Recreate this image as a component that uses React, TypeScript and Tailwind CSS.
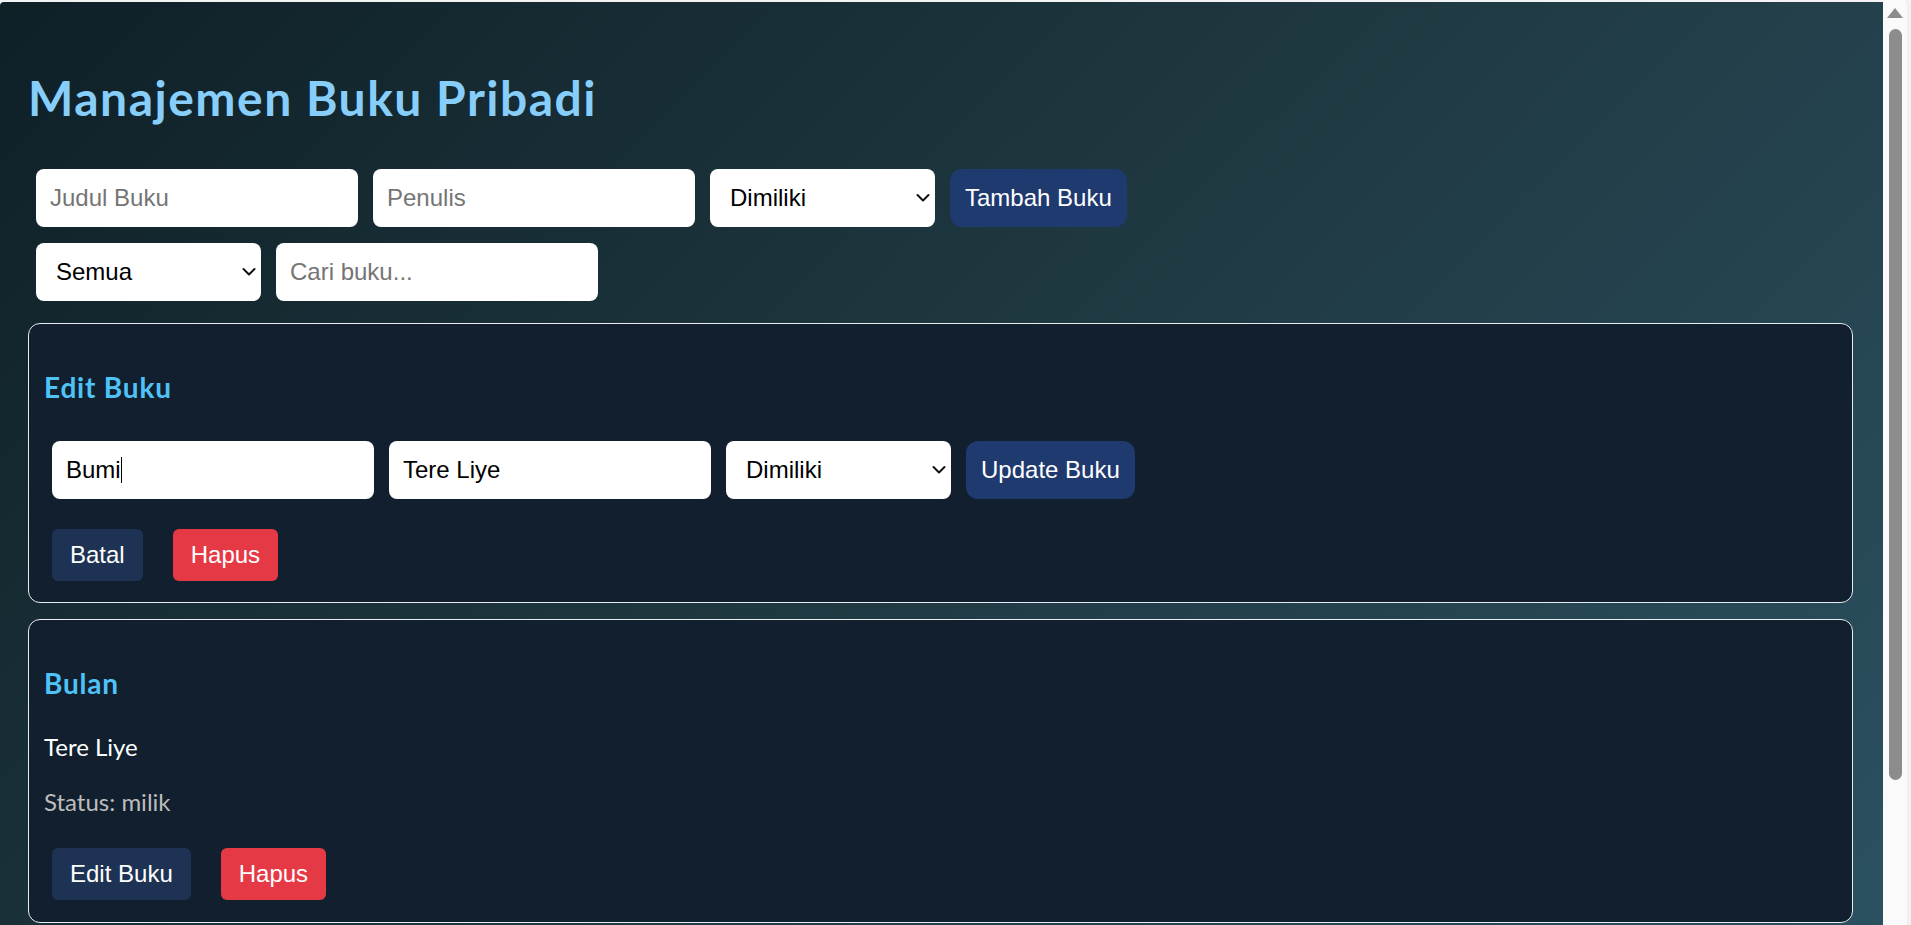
import React from "react";

function Chevron() {
  return (
    <svg
      className="pointer-events-none absolute right-[5px] top-1/2 -translate-y-1/2"
      width="14"
      height="9"
      viewBox="0 0 14 9"
      fill="none"
    >
      <path d="M1.5 1.5 L7 7 L12.5 1.5" stroke="#111" strokeWidth="2" strokeLinecap="round" strokeLinejoin="round" />
    </svg>
  );
}

function TextField({ placeholder, value, caretAt }: { placeholder?: string; value?: string; caretAt?: number }) {
  return (
    <div className="relative">
      <input
        defaultValue={value}
        placeholder={placeholder}
        className="h-[58px] w-[322px] rounded-[8px] border-0 bg-white px-[14px] font-['Liberation_Sans',Arial,sans-serif] text-[24px] text-black outline-none placeholder:text-[#757575]"
      />
      {caretAt != null && (
        <span className="absolute top-[16px] h-[26px] w-px bg-black" style={{ left: caretAt }} />
      )}
    </div>
  );
}

function SelectField({ value, options }: { value: string; options: string[] }) {
  return (
    <div className="relative h-[58px] w-[225px]">
      <select
        defaultValue={value}
        className="h-full w-full appearance-none rounded-[8px] border-0 bg-white pl-[20px] font-['Liberation_Sans',Arial,sans-serif] text-[24px] text-black outline-none"
      >
        {options.map((o) => (
          <option key={o}>{o}</option>
        ))}
      </select>
      <Chevron />
    </div>
  );
}

function PrimaryButton({ children }: { children: React.ReactNode }) {
  return (
    <button className="h-[58px] rounded-[12px] bg-[#1f3a6f] px-[15px] font-['Liberation_Sans',Arial,sans-serif] text-[24px] text-white">
      {children}
    </button>
  );
}

function SmallButton({ children, danger }: { children: React.ReactNode; danger?: boolean }) {
  return (
    <button
      className={
        danger
          ? "h-[52px] rounded-[6px] bg-[#e63946] px-[18px] font-['Liberation_Sans',Arial,sans-serif] text-[24px] text-white"
          : "h-[52px] rounded-[6px] bg-[#1e3353] px-[18px] font-['Liberation_Sans',Arial,sans-serif] text-[24px] text-white"
      }
    >
      {children}
    </button>
  );
}

function Scrollbar() {
  return (
    <div className="flex w-[28px] shrink-0 flex-col items-center rounded-tr-[8px] border-r-[4px] border-[#f0f0f0] bg-[#fafafa] pt-[8px]">
      <svg width="16" height="10" viewBox="0 0 16 10">
        <path d="M8 0 L16 10 L0 10 Z" fill="#8c8c8c" />
      </svg>
      <div className="mt-[11px] h-[751px] w-[13px] rounded-full bg-[#8c8c8c]" />
    </div>
  );
}

export default function App() {
  return (
    <div className="flex h-[925px] w-[1911px] overflow-hidden bg-[#f3f3f3] font-['Lato',sans-serif]">
      <div className="mt-[2px] flex-1 overflow-hidden rounded-tl-[4px]">
        <div className="min-h-[1075px] bg-[linear-gradient(135deg,#0f2027,#203a43,#2c5364)] pl-[28px] pr-[30px] pt-[67px]">
          <h1 className="text-[48px] font-bold leading-[58px] tracking-[1.5px] text-[#87cefa]">Manajemen Buku Pribadi</h1>

          <div className="ml-[8px] mt-[42px] flex gap-[15px]">
            <TextField placeholder="Judul Buku" />
            <TextField placeholder="Penulis" />
            <SelectField value="Dimiliki" options={["Dimiliki", "Dipinjam", "Wishlist"]} />
            <PrimaryButton>Tambah Buku</PrimaryButton>
          </div>

          <div className="ml-[8px] mt-[16px] flex gap-[15px]">
            <SelectField value="Semua" options={["Semua", "Dimiliki", "Dipinjam", "Wishlist"]} />
            <TextField placeholder="Cari buku..." />
          </div>

          <section className="mt-[22px] rounded-[12px] border border-[#e6ecef] bg-[#111f2e] px-[15px] pb-[21px]">
            <h3 className="mt-[46px] text-[28px] font-bold leading-[34px] tracking-[0.8px] text-[#4fc3f7]">Edit Buku</h3>
            <div className="ml-[8px] mt-[37px] flex gap-[15px]">
              <TextField value="Bumi" caretAt={69} />
              <TextField value="Tere Liye" />
              <SelectField value="Dimiliki" options={["Dimiliki", "Dipinjam", "Wishlist"]} />
              <PrimaryButton>Update Buku</PrimaryButton>
            </div>
            <div className="ml-[8px] mt-[30px] flex gap-[30px]">
              <SmallButton>Batal</SmallButton>
              <SmallButton danger>Hapus</SmallButton>
            </div>
          </section>

          <section className="mt-[16px] rounded-[12px] border border-[#e6ecef] bg-[#111f2e] px-[15px] pb-[22px]">
            <h3 className="mt-[46px] text-[28px] font-bold leading-[34px] tracking-[0.8px] text-[#4fc3f7]">Bulan</h3>
            <p className="mt-[32px] text-[24px] leading-[29px] text-white">Tere Liye</p>
            <p className="mt-[26px] text-[24px] leading-[29px] text-[#bdbdbd]">Status: milik</p>
            <div className="ml-[8px] mt-[32px] flex gap-[30px]">
              <SmallButton>Edit Buku</SmallButton>
              <SmallButton danger>Hapus</SmallButton>
            </div>
          </section>
        </div>
      </div>
      <Scrollbar />
    </div>
  );
}
